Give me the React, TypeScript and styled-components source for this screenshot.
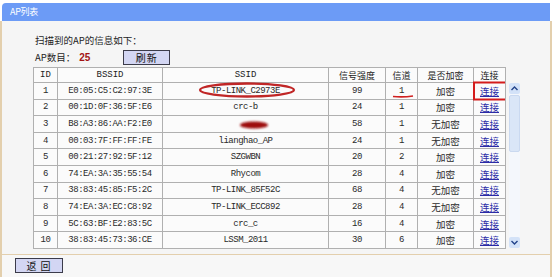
import React from "react";
import styled, { createGlobalStyle } from "styled-components";

const GlobalStyle = createGlobalStyle`
  body {
    margin: 0;
    background: #ffffff;
  }
`;

interface IRow {
  id: number;
  bssid: string;
  ssid: string;
  signal: number;
  channel: number;
  secure: boolean;
}

const rows: IRow[] = [
  { id: 1, bssid: "E0:05:C5:C2:97:3E", ssid: "TP-LINK_C2973E", signal: 99, channel: 1, secure: true },
  { id: 2, bssid: "00:1D:0F:36:5F:E6", ssid: "crc-b", signal: 24, channel: 1, secure: true },
  { id: 3, bssid: "B8:A3:86:AA:F2:E0", ssid: "", signal: 58, channel: 1, secure: false },
  { id: 4, bssid: "00:03:7F:FF:FF:FE", ssid: "lianghao_AP", signal: 24, channel: 1, secure: false },
  { id: 5, bssid: "00:21:27:92:5F:12", ssid: "SZGWBN", signal: 20, channel: 2, secure: true },
  { id: 6, bssid: "74:EA:3A:35:55:54", ssid: "Rhycom", signal: 28, channel: 4, secure: true },
  { id: 7, bssid: "38:83:45:85:F5:2C", ssid: "TP-LINK_85F52C", signal: 68, channel: 4, secure: false },
  { id: 8, bssid: "74:EA:3A:EC:C8:92", ssid: "TP-LINK_ECC892", signal: 28, channel: 4, secure: false },
  { id: 9, bssid: "5C:63:BF:E2:83:5C", ssid: "crc_c", signal: 16, channel: 4, secure: true },
  { id: 10, bssid: "38:83:45:73:36:CE", ssid: "LSSM_2011", signal: 30, channel: 6, secure: true },
];

const widths = [24, 105, 166, 57, 32, 56, 32];

const App: React.FC = () => {
  return (
    <Page>
      <GlobalStyle />
      <TitleBar>AP列表</TitleBar>
      <Panel>
        <Content>
          <Intro>扫描到的AP的信息如下：</Intro>
          <CountRow>
            <span>AP数目：</span>
            <Count>25</Count>
            <Button $w={47}>刷新</Button>
          </CountRow>

          <TableArea>
            <TableHold>
              <Table>
                <colgroup>
                  {widths.map((w, i) => (
                    <col key={i} style={{ width: w }} />
                  ))}
                </colgroup>
                <thead>
                  <tr>
                    <Th>ID</Th>
                    <Th>BSSID</Th>
                    <Th>SSID</Th>
                    <Th>信号强度</Th>
                    <Th>信道</Th>
                    <Th>是否加密</Th>
                    <Th>连接</Th>
                  </tr>
                </thead>
                <tbody>
                  {rows.map((r) => (
                    <tr key={r.id}>
                      <Td>{r.id}</Td>
                      <Td>{r.bssid}</Td>
                      <Td>{r.ssid}</Td>
                      <Td>{r.signal}</Td>
                      <Td>{r.channel}</Td>
                      <Td $cjk>{r.secure ? "加密" : "无加密"}</Td>
                      <Td $cjk>
                        <Link href="#">连接</Link>
                      </Td>
                    </tr>
                  ))}
                </tbody>
              </Table>

              {/* hand-drawn red marks over the list */}
              <Marks width="472" height="182" viewBox="0 0 472 182">
                <defs>
                  <filter id="soft" x="-20%" y="-60%" width="140%" height="220%">
                    <feGaussianBlur stdDeviation="1" />
                  </filter>
                </defs>
                <ellipse cx="214" cy="23" rx="47" ry="6.5" fill="none" stroke="#c02626" strokeWidth="2.3" />
                <path d="M360 29.5 Q370 30.5 380 29" fill="none" stroke="#d02020" strokeWidth="1.6" />
                <rect x="441" y="15.5" width="33" height="17" fill="none" stroke="#d41c1c" strokeWidth="2" />
                <ellipse cx="221" cy="58" rx="14" ry="3.6" fill="#9e1010" filter="url(#soft)" />
              </Marks>
            </TableHold>

            <Scrollbar>
              <ArrowBtn>
                <svg width="7" height="5" viewBox="0 0 7 5">
                  <path d="M0.5 4 L3.5 1 L6.5 4" fill="none" stroke="#23438a" strokeWidth="1.4" />
                </svg>
              </ArrowBtn>
              <Thumb />
              <Track />
              <ArrowBtn>
                <svg width="7" height="5" viewBox="0 0 7 5">
                  <path d="M0.5 1 L3.5 4 L6.5 1" fill="none" stroke="#23438a" strokeWidth="1.4" />
                </svg>
              </ArrowBtn>
            </Scrollbar>
          </TableArea>
        </Content>

        <Footer>
          <Button $w={48}>返 回</Button>
        </Footer>
      </Panel>
    </Page>
  );
};

export default App;

const Page = styled.div`
  width: 552px;
  padding-top: 3px;
  font-family: "Noto Sans CJK SC", "Noto Sans", sans-serif;
  color: #222;
`;

const TitleBar = styled.div`
  margin-left: 2px;
  margin-right: 2px;
  height: 18px;
  line-height: 18px;
  padding-left: 8px;
  background: #6c9bf6;
  border-top-left-radius: 4px;
  color: #ffffff;
  font-size: 9px;
  letter-spacing: -0.3px;
`;

const Panel = styled.div`
  background: #f5f5f5;
  border-left: 2px solid #e3cfad;
  border-right: 2px solid #e3cfad;
  border-bottom: 2px solid #e3cfad;
`;

const Content = styled.div`
  padding: 11px 0 5px 31px;
`;

const Intro = styled.div`
  padding-left: 2px;
  height: 16px;
  line-height: 16px;
  font-size: 9.5px;
  color: #1e1e1e;
`;

const CountRow = styled.div`
  display: flex;
  align-items: center;
  padding-left: 2px;
  height: 16px;
  margin-top: 1px;
  margin-bottom: 2px;
  font-size: 9.5px;
  color: #1e1e1e;
`;

const Count = styled.span`
  width: 44px;
  padding-left: 4px;
  color: #a31414;
  font-weight: bold;
  font-family: "Liberation Sans", sans-serif;
  font-size: 10px;
`;

const Button = styled.div<{ $w: number }>`
  width: ${(p) => p.$w - 2}px;
  height: 13px;
  line-height: 13px;
  text-align: center;
  background: #d3d6f3;
  border: 1px solid #3b3b4a;
  font-size: 10px;
  letter-spacing: 1px;
  color: #111;
`;

const TableArea = styled.div`
  display: flex;
  align-items: flex-start;
  gap: 4px;
`;

const TableHold = styled.div`
  position: relative;
  width: 472px;
`;

const Table = styled.table`
  width: 472px;
  table-layout: fixed;
  border-collapse: collapse;
  background: #fbfbfb;
  border: 1px solid #a9a9a9;
`;

const Th = styled.th`
  height: 14px;
  padding: 0;
  border: 1px solid #b0b0b0;
  font-weight: normal;
  font-size: 9px;
  font-family: "Liberation Mono", "Noto Sans CJK SC", monospace;
  color: #222;
  text-align: center;
`;

const Td = styled.td<{ $cjk?: boolean }>`
  height: 15.6px;
  padding: 0;
  border: 1px solid #b0b0b0;
  text-align: center;
  white-space: nowrap;
  overflow: hidden;
  color: #2a2a2a;
  font-family: ${(p) =>
    p.$cjk ? `"Noto Sans CJK SC", sans-serif` : `"Liberation Mono", monospace`};
  font-size: ${(p) => (p.$cjk ? "9.5px" : "9px")};
  letter-spacing: ${(p) => (p.$cjk ? "0" : "-0.5px")};
`;

const Link = styled.a`
  color: #2b2ba6;
  text-decoration: underline;
`;

const Marks = styled.svg`
  position: absolute;
  left: 0;
  top: 0;
  pointer-events: none;
`;

const Scrollbar = styled.div`
  margin-top: 16px;
  width: 11px;
  height: 165px;
  display: flex;
  flex-direction: column;
  background: #f4f7fc;
`;

const ArrowBtn = styled.div`
  width: 11px;
  height: 11px;
  display: flex;
  align-items: center;
  justify-content: center;
  background: #d3e2f8;
  border-radius: 2px;
`;

const Thumb = styled.div`
  height: 55px;
  margin-top: 1px;
  background: #dae6f7;
  border: 1px solid #cad9f0;
  border-radius: 2px;
`;

const Track = styled.div`
  flex: 1;
`;

const Footer = styled.div`
  border-top: 1px solid #e3cfad;
  background: #f7f7f7;
  height: 22px;
  display: flex;
  align-items: center;
  padding-left: 13px;
`;
